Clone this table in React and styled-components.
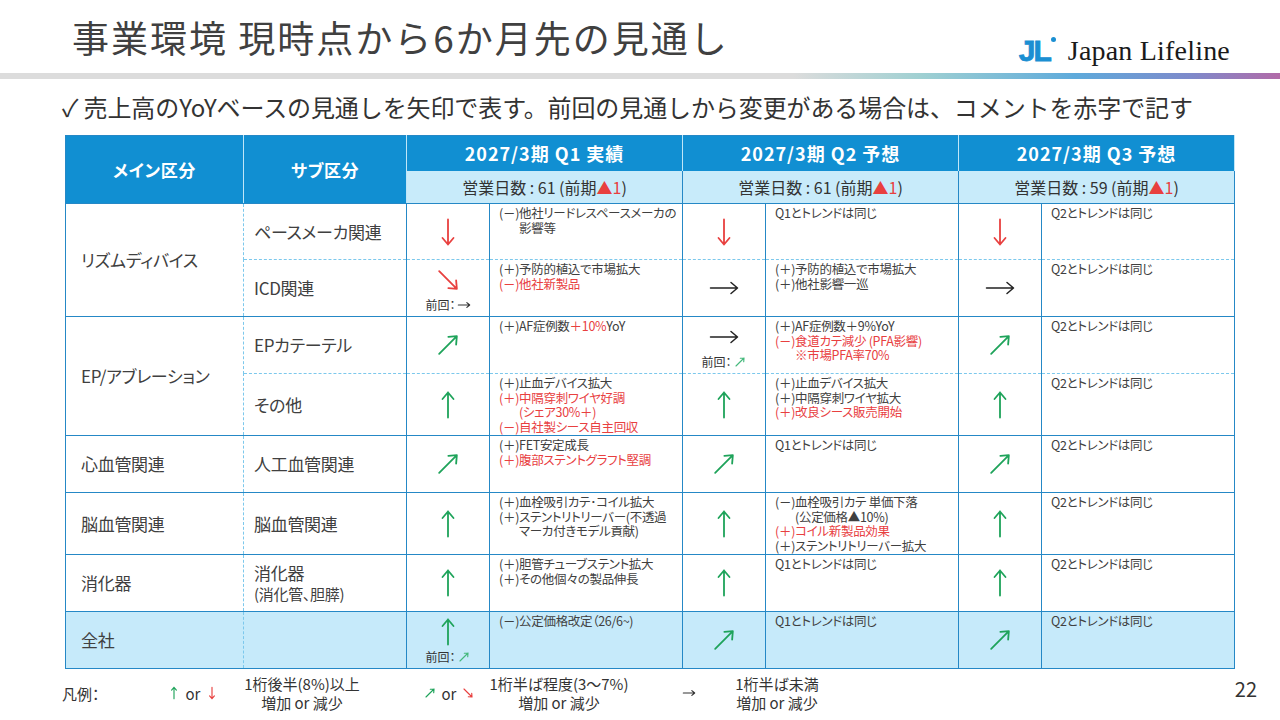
import React from "react";
import styled, { createGlobalStyle } from "styled-components";

const JP = '"Noto Sans CJK JP", "Noto Sans", sans-serif';
const RED = "#e8403f";
const GREEN = "#1ea35a";
const LINE = "#2588c6";
const DASH = "#7cc8ec";
const TEXT = "#404040";

const GlobalStyle = createGlobalStyle`
  html, body { margin: 0; padding: 0; background: #fff; }
  body { font-family: ${JP}; color: ${TEXT}; }
`;

const Page = styled.div`
  width: 1280px;
  height: 720px;
  overflow: hidden;
  display: flex;
  flex-direction: column;
  background: #fff;
`;

// --- entête
const Header = styled.header`
  height: 73px;
  display: flex;
  justify-content: space-between;
  align-items: flex-end;
  padding: 0 50px 0 72px;
  box-sizing: border-box;
`;

const Title = styled.h1`
  margin: 0 0 14px;
  font-size: 37px;
  line-height: 44px;
  font-weight: 400;
  letter-spacing: 2px;
  color: #404040;
  font-family: ${JP};
`;

const Logo = styled.div`
  display: flex;
  align-items: center;
  gap: 12px;
  margin-bottom: 8px;
`;

const LogoMark = styled.div`
  position: relative;
  font-family: "Liberation Sans", Arial, sans-serif;
  font-weight: 700;
  font-size: 30px;
  line-height: 28px;
  letter-spacing: -2px;
  color: #1b8fd2;
  padding-right: 6px;
  -webkit-text-stroke: 0.8px #1b8fd2;

  &::after {
    content: "";
    position: absolute;
    top: 0;
    right: 0;
    width: 5px;
    height: 5px;
    border-radius: 50%;
    background: #1b8fd2;
  }
`;

const LogoText = styled.div`
  font-family: "Liberation Serif", "Times New Roman", serif;
  font-size: 28px;
  line-height: 28px;
  color: #1a1a1a;
  letter-spacing: 0.2px;
`;

const Bar = styled.div`
  height: 6px;
  background: linear-gradient(
    to right,
    #dcdcdc 0%,
    #dcdcdc 62%,
    #9fd0d2 72%,
    #5eaadb 84%,
    #7e8acb 93%,
    #b26aa8 100%
  );
`;

const Lead = styled.p`
  margin: 11px 0 0 62px;
  font-size: 24px;
  line-height: 34px;
  color: #333;
  white-space: nowrap;
  letter-spacing: -0.1px;
`;

// --- tableau
const Table = styled.table`
  margin: 11px 0 0 65px;
  width: 1169px;
  table-layout: fixed;
  border-collapse: collapse;
  border: 1.5px solid ${LINE};
  font-family: ${JP};
  font-feature-settings: "palt";
`;

const Col = styled.col`
  width: ${(p) => p.$w}px;
`;

const HeadRow = styled.tr`
  height: ${(p) => p.$h}px;
`;

const HeadTh = styled.th`
  background: #118fd2;
  color: #fff;
  font-weight: 700;
  font-size: ${(p) => (p.$big ? 18 : 17)}px;
  letter-spacing: ${(p) => (p.$big ? 1 : 0.6)}px;
  border-right: 1px solid #bfe6f8;
  border-bottom: ${(p) => (p.$last ? `1.5px solid ${LINE}` : "0")};
  padding: 0;
`;

const DaysTh = styled.th`
  background: #c8ebfa;
  color: #333;
  font-weight: 400;
  font-size: 16px;
  border-right: 1.5px solid ${LINE};
  border-bottom: 1.5px solid ${LINE};
  padding: 0;
`;

const Red = styled.span`
  color: ${RED};
`;

const BodyRow = styled.tr`
  height: ${(p) => p.$h}px;
`;

const Td = styled.td`
  padding: 0;
  background: ${(p) => (p.$total ? "#c6eafa" : "#fff")};
  border-right: 1.5px ${(p) => (p.$dashRight ? `dashed ${DASH}` : `solid ${LINE}`)};
  border-bottom: 1.5px ${(p) => (p.$dashBottom ? `dashed ${DASH}` : `solid ${LINE}`)};
`;

const LabelTd = styled(Td)`
  padding-left: ${(p) => p.$pad}px;
  font-size: 17px;
  line-height: 22px;
  color: ${TEXT};
  vertical-align: middle;
  white-space: nowrap;
  letter-spacing: -0.3px;
`;

const SubNote = styled.div`
  font-size: 15px;
  line-height: 20px;
`;

const ArrowTd = styled(Td)`
  vertical-align: middle;
`;

const ArrowStack = styled.div`
  display: flex;
  flex-direction: column;
  align-items: center;
`;

const Note = styled.div`
  display: flex;
  align-items: center;
  gap: 1px;
  font-size: 12px;
  line-height: 14px;
  color: #333;
  margin-top: 2px;
`;

const CommentTd = styled(Td)`
  vertical-align: top;
  padding: 2px 4px 0 9px;
  font-size: 12.5px;
  line-height: 14.6px;
  letter-spacing: -0.3px;
  color: ${TEXT};
`;

const Line = styled.div`
  white-space: nowrap;
  padding-left: ${(p) => (p.$indent ? 20 : 0)}px;
  color: ${(p) => (p.$red ? RED : "inherit")};
`;

// --- pied de page
const Footer = styled.footer`
  display: flex;
  justify-content: space-between;
  align-items: flex-start;
  padding: 5px 23px 0 62px;
  font-size: 15px;
  color: #333;
  font-feature-settings: "palt";
`;

const Legend = styled.div`
  display: flex;
  align-items: center;
`;

const LegendItem = styled.div`
  width: ${(p) => p.$w}px;
  margin-left: ${(p) => p.$ml || 0}px;
  text-align: center;
  line-height: 19px;
  display: flex;
  flex-direction: column;
  align-items: ${(p) => (p.$left ? "flex-start" : "center")};
`;

const Pair = styled.div`
  display: flex;
  align-items: center;
  gap: 5px;
`;

const PageNo = styled.div`
  font-size: 20px;
  line-height: 30px;
  color: #333;
`;

const ArrowSvg = styled.svg`
  display: block;
  width: ${(p) => p.$size}px;
  height: ${(p) => p.$size}px;
  overflow: visible;
`;

const ANG = { up: 0, ne: 45, right: 90, se: 135, down: 180 };
const COLOR = { up: GREEN, ne: GREEN, right: "#222", se: RED, down: RED };

const Arrow = ({ dir, size = 32, len = 25, sw = 1.8, color }) => {
  const h = len / 2;
  return (
    <ArrowSvg $size={size} viewBox="-16 -16 32 32">
      <g
        transform={`rotate(${ANG[dir]})`}
        stroke={color || COLOR[dir]}
        strokeWidth={sw}
        fill="none"
        strokeLinecap="round"
        strokeLinejoin="round"
      >
        <path d={`M0 ${h} V${-h} M-5.5 ${-h + 6.5} L0 ${-h} L5.5 ${-h + 6.5}`} />
      </g>
    </ArrowSvg>
  );
};

const SmallArrow = ({ dir, color }) => (
  <Arrow dir={dir} size={14} len={26} sw={2.6} color={color} />
);

// --- données
const SAME1 = ["Q1とトレンドは同じ"];
const SAME2 = ["Q2とトレンドは同じ"];

const groups = [
  {
    main: "リズムディバイス",
    rows: [
      {
        sub: "ペースメーカ関連",
        h: 56,
        q: [
          { a: "down", c: ["(－)他社リードレスペースメーカの", { i: true, t: "影響等" }] },
          { a: "down", c: SAME1 },
          { a: "down", c: SAME2 },
        ],
      },
      {
        sub: "ICD関連",
        h: 57,
        q: [
          { a: "se", prev: "right", c: ["(＋)予防的植込で市場拡大", { r: true, t: "(－)他社新製品" }] },
          { a: "right", c: ["(＋)予防的植込で市場拡大", "(＋)他社影響一巡"] },
          { a: "right", c: SAME2 },
        ],
      },
    ],
  },
  {
    main: "EP/アブレーション",
    rows: [
      {
        sub: "EPカテーテル",
        h: 57,
        q: [
          { a: "ne", c: [{ t: ["(＋)AF症例数", { r: "＋10%" }, "YoY"] }] },
          {
            a: "right",
            prev: "ne",
            c: [
              "(＋)AF症例数＋9%YoY",
              { r: true, t: "(－)食道カテ減少 (PFA影響)" },
              { r: true, i: true, t: "※市場PFA率70%" },
            ],
          },
          { a: "ne", c: SAME2 },
        ],
      },
      {
        sub: "その他",
        h: 62,
        q: [
          {
            a: "up",
            c: [
              "(＋)止血デバイス拡大",
              { r: true, t: "(＋)中隔穿刺ワイヤ好調" },
              { r: true, i: true, t: "(シェア30%＋)" },
              { r: true, t: "(－)自社製シース自主回収" },
            ],
          },
          {
            a: "up",
            c: ["(＋)止血デバイス拡大", "(＋)中隔穿刺ワイヤ拡大", { r: true, t: "(＋)改良シース販売開始" }],
          },
          { a: "up", c: SAME2 },
        ],
      },
    ],
  },
  {
    main: "心血管関連",
    rows: [
      {
        sub: "人工血管関連",
        h: 57,
        q: [
          { a: "ne", c: ["(＋)FET安定成長", { r: true, t: "(＋)腹部ステントグラフト堅調" }] },
          { a: "ne", c: SAME1 },
          { a: "ne", c: SAME2 },
        ],
      },
    ],
  },
  {
    main: "脳血管関連",
    rows: [
      {
        sub: "脳血管関連",
        h: 62,
        q: [
          {
            a: "up",
            c: [
              "(＋)血栓吸引カテ･コイル拡大",
              "(＋)ステントリトリーバー(不透過",
              { i: true, t: "マーカ付きモデル貢献)" },
            ],
          },
          {
            a: "up",
            c: [
              "(－)血栓吸引カテ 単価下落",
              { i: true, t: "(公定価格▲10%)" },
              { r: true, t: "(＋)コイル新製品効果" },
              "(＋)ステントリトリーバー拡大",
            ],
          },
          { a: "up", c: SAME2 },
        ],
      },
    ],
  },
  {
    main: "消化器",
    rows: [
      {
        sub: "消化器",
        subNote: "(消化管、胆膵)",
        h: 57,
        q: [
          { a: "up", c: ["(＋)胆管チューブステント拡大", "(＋)その他個々の製品伸長"] },
          { a: "up", c: SAME1 },
          { a: "up", c: SAME2 },
        ],
      },
    ],
  },
  {
    main: "全社",
    total: true,
    rows: [
      {
        sub: "",
        h: 57,
        q: [
          { a: "up", prev: "ne", c: ["(－)公定価格改定（26/6~)"] },
          { a: "ne", c: SAME1 },
          { a: "ne", c: SAME2 },
        ],
      },
    ],
  },
];

const quarters = [
  { title: "2027/3期 Q1 実績", days: "61" },
  { title: "2027/3期 Q2 予想", days: "61" },
  { title: "2027/3期 Q3 予想", days: "59" },
];

const renderLine = (line, k) => {
  const l = typeof line === "string" ? { t: line } : line;
  const parts = Array.isArray(l.t) ? l.t : [l.t];
  return (
    <Line key={k} $indent={l.i} $red={l.r}>
      {parts.map((p, j) => (typeof p === "string" ? p : <Red key={j}>{p.r}</Red>))}
    </Line>
  );
};

const App = () => (
  <Page>
    <GlobalStyle />
    <Header>
      <Title>事業環境 現時点から6か月先の見通し</Title>
      <Logo>
        <LogoMark>JL</LogoMark>
        <LogoText>Japan Lifeline</LogoText>
      </Logo>
    </Header>
    <Bar />
    <Lead>✓ 売上高のYoYベースの見通しを矢印で表す。前回の見通しから変更がある場合は、コメントを赤字で記す</Lead>

    <Table>
      <colgroup>
        <Col $w={178} />
        <Col $w={163} />
        {quarters.map((q) => (
          <React.Fragment key={q.title}>
            <Col $w={83} />
            <Col $w={193} />
          </React.Fragment>
        ))}
      </colgroup>
      <thead>
        <HeadRow $h={35}>
          <HeadTh rowSpan={2} $last>メイン区分</HeadTh>
          <HeadTh rowSpan={2} $last>サブ区分</HeadTh>
          {quarters.map((q) => (
            <HeadTh key={q.title} colSpan={2} $big>
              {q.title}
            </HeadTh>
          ))}
        </HeadRow>
        <HeadRow $h={33}>
          {quarters.map((q) => (
            <DaysTh key={q.title} colSpan={2}>
              営業日数 : {q.days} (前期<Red>▲1</Red>)
            </DaysTh>
          ))}
        </HeadRow>
      </thead>
      <tbody>
        {groups.map((g) =>
          g.rows.map((r, ri) => {
            const dash = ri < g.rows.length - 1;
            return (
              <BodyRow key={g.main + ri} $h={r.h}>
                {ri === 0 && (
                  <LabelTd rowSpan={g.rows.length} $pad={15} $dashRight $total={g.total}>
                    {g.main}
                  </LabelTd>
                )}
                <LabelTd $pad={10} $dashBottom={dash} $total={g.total}>
                  {r.sub}
                  {r.subNote && <SubNote>{r.subNote}</SubNote>}
                </LabelTd>
                {r.q.map((q, qi) => (
                  <React.Fragment key={qi}>
                    <ArrowTd $dashBottom={dash} $total={g.total}>
                      <ArrowStack>
                        {q.a === "right" ? (
                          <Arrow dir="right" size={32} len={27} sw={1.5} />
                        ) : (
                          <Arrow dir={q.a} />
                        )}
                        {q.prev && (
                          <Note>
                            前回：
                            <SmallArrow dir={q.prev} color={q.prev === "right" ? "#333" : "#45b97c"} />
                          </Note>
                        )}
                      </ArrowStack>
                    </ArrowTd>
                    <CommentTd $dashBottom={dash} $total={g.total}>
                      {q.c.map(renderLine)}
                    </CommentTd>
                  </React.Fragment>
                ))}
              </BodyRow>
            );
          })
        )}
      </tbody>
    </Table>

    <Footer>
      <Legend>
        <LegendItem $w={103} $left>凡例：</LegendItem>
        <LegendItem $w={56}>
          <Pair>
            <SmallArrow dir="up" />
            or
            <SmallArrow dir="down" />
          </Pair>
        </LegendItem>
        <LegendItem $w={150} $ml={6}>
          <span>1桁後半(8%)以上</span>
          <span>増加 or 減少</span>
        </LegendItem>
        <LegendItem $w={56} $ml={44}>
          <Pair>
            <SmallArrow dir="ne" />
            or
            <SmallArrow dir="se" />
          </Pair>
        </LegendItem>
        <LegendItem $w={160} $ml={2}>
          <span>1桁半ば程度(3～7%)</span>
          <span>増加 or 減少</span>
        </LegendItem>
        <LegendItem $w={16} $ml={42}>
          <SmallArrow dir="right" color="#333" />
        </LegendItem>
        <LegendItem $w={150} $ml={5}>
          <span>1桁半ば未満</span>
          <span>増加 or 減少</span>
        </LegendItem>
      </Legend>
      <PageNo>22</PageNo>
    </Footer>
  </Page>
);

export default App;
